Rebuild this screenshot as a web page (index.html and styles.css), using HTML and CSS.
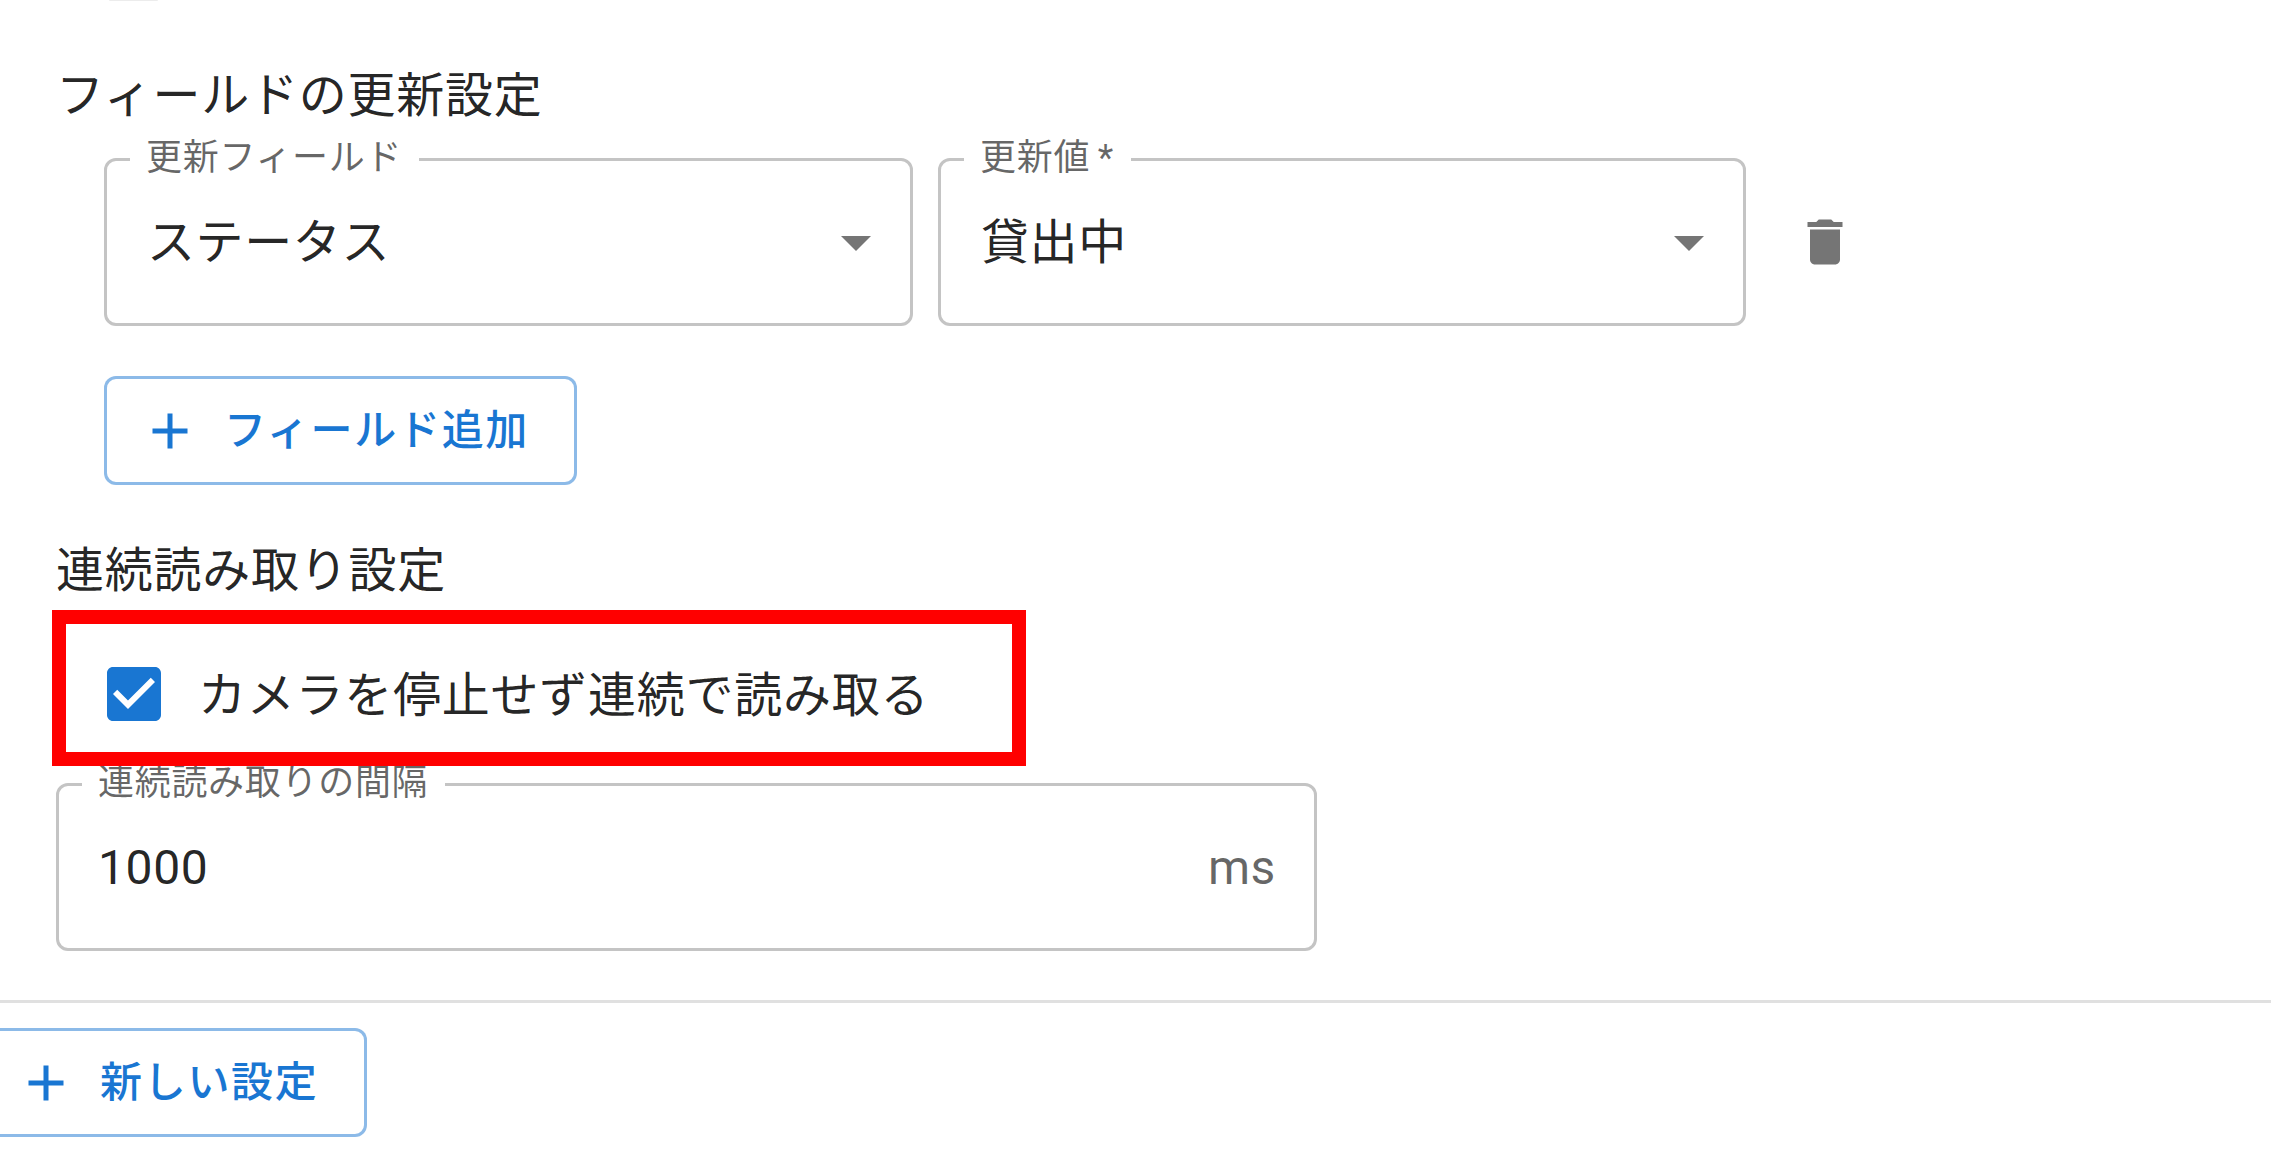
FILE: index.html
```html
<!DOCTYPE html>
<html lang="ja">
<head>
<meta charset="utf-8">
<title>連続読み取り設定</title>
<link rel="stylesheet" href="styles.css">
</head>
<body>
<main class="page">
  <div class="top-remnant"></div>
  <section class="form">
    <h2 class="heading heading-fields">フィールドの更新設定</h2>
    <div class="field-row">
      <div class="outlined select">
        <span class="float-label">更新フィールド</span>
        <span class="value">ステータス</span>
        <svg class="arrow" viewBox="0 0 24 24"><path d="M7 10l5 5 5-5z"/></svg>
      </div>
      <div class="outlined select select-value">
        <span class="float-label label-required">更新値 *</span>
        <span class="value">貸出中</span>
        <svg class="arrow" viewBox="0 0 24 24"><path d="M7 10l5 5 5-5z"/></svg>
      </div>
      <svg class="trash" viewBox="0 0 24 24"><path d="M6 19c0 1.1.9 2 2 2h8c1.1 0 2-.9 2-2V7H6v12zM19 4h-3.5l-1-1h-5l-1 1H5v2h14V4z"/></svg>
    </div>
    <button class="btn btn-add-field" type="button">
      <svg class="plus" viewBox="0 0 24 24"><path d="M19 13h-6v6h-2v-6H5v-2h6V5h2v6h6v2z"/></svg>
      <span class="btn-text">フィールド追加</span>
    </button>
    <h2 class="heading heading-continuous">連続読み取り設定</h2>
    <label class="check-row">
      <svg class="checkbox" viewBox="0 0 24 24"><path d="M19 3H5c-1.11 0-2 .9-2 2v14c0 1.1.89 2 2 2h14c1.1 0 2-.9 2-2V5c0-1.11-.9-2-2-2zm-9 14l-5-5 1.41-1.41L10 14.17l7.59-7.59L19 8l-9 9z"/></svg>
      <span class="check-text">カメラを停止せず連続で読み取る</span>
    </label>
    <div class="outlined number">
      <span class="float-label">連続読み取りの間隔</span>
      <span class="value">1000</span>
      <span class="unit">ms</span>
    </div>
  </section>
  <hr class="divider">
  <button class="btn btn-new" type="button">
    <svg class="plus" viewBox="0 0 24 24"><path d="M19 13h-6v6h-2v-6H5v-2h6V5h2v6h6v2z"/></svg>
    <span class="btn-text">新しい設定</span>
  </button>
  <div class="highlight"></div>
</main>
</body>
</html>
```
FILE: styles.css
```css
* { box-sizing: border-box; }
html, body { margin: 0; height: 100%; }
body {
  background: #fff;
  color: rgba(0, 0, 0, 0.87);
  font-family: Roboto, "Noto Sans CJK JP", sans-serif;
  overflow: hidden;
}
.page { position: relative; width: 2271px; height: 1170px; overflow: hidden; }
.top-remnant { position: absolute; left: 109px; top: 0; width: 49px; height: 1px; border-radius: 0 0 2px 2px; background: #ececec; }
.form { padding: 60px 0 0 56px; }
.heading { margin: 0; font-size: 48px; font-weight: 400; line-height: 72px; letter-spacing: 0.75px; }
.field-row { display: flex; align-items: center; gap: 25px; margin: 26px 0 0 48px; }
.outlined {
  position: relative;
  display: flex;
  align-items: center;
  height: 168px;
  padding-top: 2px;
  border: 3px solid #c4c4c4;
  border-radius: 12px;
  background: #fff;
}
.select { width: 809px; padding-left: 40px; }
.select-value { width: 808px; }
.number { width: 1261px; padding: 2px 38px 0 39px; justify-content: space-between; margin-top: 17px; }
.value { font-size: 48px; line-height: 72px; letter-spacing: 0.6px; }
.unit { font-size: 48px; line-height: 72px; letter-spacing: 0.6px; color: rgba(0, 0, 0, 0.6); }
.float-label {
  position: absolute;
  left: 23px;
  top: -27px;
  padding: 0 17px 0 16px;
  background: #fff;
  color: rgba(0, 0, 0, 0.6);
  font-size: 36px;
  line-height: 48px;
  letter-spacing: 0.7px;
  white-space: nowrap;
}
.label-required { word-spacing: -2px; }
.arrow { position: absolute; right: 18px; top: 45px; width: 72px; height: 72px; fill: #757575; }
.trash { width: 60px; height: 60px; margin-left: 24px; fill: #757575; }
.btn {
  display: flex;
  align-items: center;
  height: 109px;
  padding: 0 0 0 45px;
  border: 3px solid rgba(25, 118, 210, 0.5);
  border-radius: 12px;
  background: #fff;
  color: #1976d2;
  font-family: inherit;
  font-size: 42px;
  font-weight: 500;
  letter-spacing: 1.7px;
  white-space: nowrap;
}
.btn-text { padding-bottom: 8px; }
.plus { flex: none; width: 60px; height: 60px; margin: 0 24px 0 -12px; fill: #1976d2; }
.btn-add-field { margin: 50px 0 0 48px; width: 473px; }
.heading-continuous { margin-top: 50px; }
.check-row { display: flex; align-items: center; height: 144px; margin-top: 15px; padding-left: 42px; font-size: 48px; letter-spacing: 0.75px; }
.checkbox { width: 72px; height: 72px; fill: #1976d2; }
.check-text { margin-left: 28px; padding-bottom: 6px; }
.divider { height: 3px; margin: 49px 0 0; border: 0; background: #e0e0e0; }
.btn-new { margin: 25px 0 0 -20px; width: 387px; }
.highlight {
  position: absolute;
  left: 52px;
  top: 610px;
  width: 974px;
  height: 156px;
  border: 14px solid #f00;
}
```
